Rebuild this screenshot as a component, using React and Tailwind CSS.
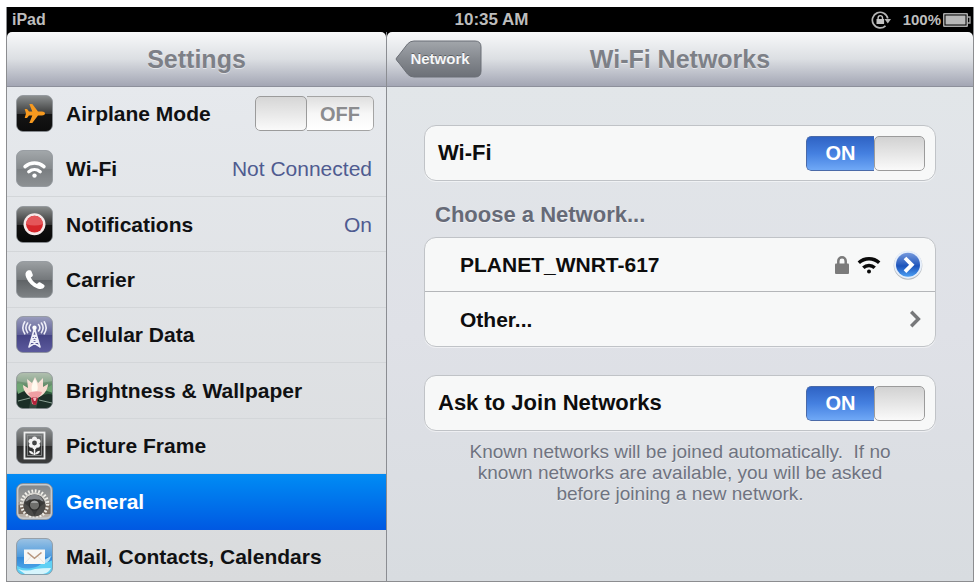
import { useState } from "react";

function Tile({ from, mid, mid2, to, id, children }) {
  return (
    <svg viewBox="0 0 37 37" className="h-[37px] w-[37px] shrink-0" aria-hidden="true">
      <defs>
        <linearGradient id={id} x1="0" y1="0" x2="0" y2="1">
          <stop offset="0" stopColor={from} />
          <stop offset="0.5" stopColor={mid} />
          <stop offset="0.52" stopColor={mid2} />
          <stop offset="1" stopColor={to} />
        </linearGradient>
        <clipPath id={id + "-clip"}>
          <rect x="0.5" y="0.5" width="36" height="36" rx="6.5" />
        </clipPath>
      </defs>
      <rect x="0.5" y="0.5" width="36" height="36" rx="6.5" fill={`url(#${id})`} />
      <g clipPath={`url(#${id}-clip)`}>{children}</g>
      <rect x="0.5" y="0.5" width="36" height="36" rx="6.5" fill="none" stroke="#8b9095" strokeOpacity="0.75" />
    </svg>
  );
}

const AirplaneIcon = () => (
  <Tile id="t-air" from="#8d9192" mid="#3c3d3d" mid2="#151515" to="#0c0c0c">
    <path
      d="M29 18.5c0-1.300-1.400-2.100-3-2.100h-4L16.300 9h-3l3 7.400h-3.300l-2-2.500H8.700l1.300 4.600-1.300 4.600H11l2-2.500h3.300l-3 7.500h3l5.700-7.500h4c1.600 0 3-.700 3-2z"
      fill="#f6991f"
    />
  </Tile>
);

const WifiTileIcon = () => (
  <Tile id="t-wifi" from="#a3a8ab" mid="#85898c" mid2="#7a7e81" to="#8d9194">
    <g fill="none" stroke="#fff" strokeWidth="3.4" strokeLinecap="round">
      <path d="M9 16.600a14.500 14.500 0 0 1 19 0" />
      <path d="M12.800 21.700a9 9 0 0 1 11.400 0" />
    </g>
    <circle cx="18.5" cy="25.6" r="2.2" fill="#fff" />
  </Tile>
);

const NotificationsIcon = () => (
  <Tile id="t-note" from="#8b8e8e" mid="#343535" mid2="#111" to="#060606">
    <circle cx="18.5" cy="18.2" r="11" fill="#f6e8e8" />
    <circle cx="18.5" cy="18.2" r="8.4" fill="#d6262b" />
    <path d="M10.100 18.200a8.400 8.400 0 0 1 16.800 0q-8.400 2.400-16.800 0z" fill="#e4565a" />
  </Tile>
);

const CarrierIcon = () => (
  <Tile id="t-car" from="#9ca0a3" mid="#74787b" mid2="#5f6366" to="#7e8285">
    <path
      d="M11.700 9.600c-2.400 1.200-2.800 3.900-1.500 6.900 2.200 5.200 6.200 9 11.400 10.900 3.100 1.100 5.700.5 6.800-1.700.4-.7.200-1.600-.5-2l-3.600-2.200c-.8-.4-1.500-.3-2.100.3l-1.200 1.300c-3-1.500-4.900-3.500-6.200-6.500l1.400-1.100c.6-.5.8-1.200.5-2l-1.300-3.300c-.4-1-2.100-1.100-3.700-.6z"
      fill="#fff"
    />
  </Tile>
);

const CellularIcon = () => (
  <Tile id="t-cell" from="#9a9dbd" mid="#5f6097" mid2="#444384" to="#5c5a9d">
    <g fill="none" stroke="#eeeef8" strokeLinecap="round" strokeWidth="1.6">
      <path d="M18.500 12.500L13 31M18.500 12.500L24 31M16.500 19.500h4M15.200 24.500h6.600M15 25l8.500 5.500M22 25l-8.500 5.500M17 19.500l4.500 5M20 19.500l-4.500 5" />
      <path d="M14.500 8.500a5 5 0 0 0 0 6.500M22.500 8.500a5 5 0 0 1 0 6.500M11.600 7a8.500 8.500 0 0 0 0 9.700M25.400 7a8.500 8.500 0 0 1 0 9.700M8.800 5.800a11 11 0 0 0 0 12M28.200 5.800a11 11 0 0 1 0 12" />
    </g>
    <circle cx="18.5" cy="11.8" r="2.2" fill="#fff" />
  </Tile>
);

const WallpaperIcon = () => (
  <Tile id="t-wall" from="#9fb09c" mid="#4c7f56" mid2="#2e5f3f" to="#35453e">
    <path d="M0 21q9-5 15 4l-2 12H0zM23 25q8-5 14-2v14H20z" fill="#1b2f27" />
    <path d="M0 12q8-3 10 6L2 22zM37 12l-9 6 9 3z" fill="#6fa574" />
    <path d="M2 29l12-3M23 28l13 3" stroke="#8ba093" strokeWidth="1" />
    <path d="M18.500 27C12 25 7 19 7 13l5 3-1-9 5 4 3-6 3 6 5-5 0 9 5-3c0 7-6 13-13.500 15z" fill="#f9dcd1" />
    <path d="M18.500 23c-4-4-4-9 .3-16 4 6 4 12-.3 16z" fill="#fffaf0" />
    <path d="M12 21q7-3 14-1-1 4-5 6l-1 7-4-1-1-6z" fill="#ef9fa3" />
    <path d="M15 26q4-1.500 7 0l-2 7-3-.5z" fill="#b3223a" />
    <path d="M17 26q2-1 3.500 0l-1 3h-1.500z" fill="#f3b4bb" />
    <path d="M0 0h37v9Q18 13 0 9z" fill="#fff" opacity="0.2" />
  </Tile>
);

const PictureFrameIcon = () => (
  <Tile id="t-pic" from="#8f9293" mid="#515353" mid2="#2b2c2c" to="#3d3e3e">
    <rect x="8.5" y="5.5" width="20" height="26" fill="none" stroke="#eceded" strokeWidth="1.8" />
    <rect x="11.5" y="8.5" width="14" height="20" fill="none" stroke="#909292" strokeWidth="0.8" />
    <g fill="#f2f2f2">
      <circle cx="18.5" cy="12" r="2.5" />
      <circle cx="15" cy="14.2" r="2.5" />
      <circle cx="22" cy="14.2" r="2.5" />
      <circle cx="15.500" cy="18.2" r="2.5" />
      <circle cx="21.500" cy="18.2" r="2.5" />
      <circle cx="18.5" cy="20" r="2.3" />
      <path d="M17.800 21h1.500v7h-1.500zM18 27.500q-4.500 0-5-3.800 4 0 5 3.800zM19 27.500q4.500 0 5-3.800-4 0-5 3.800z" />
    </g>
    <circle cx="18.5" cy="16" r="2.4" fill="#414343" />
  </Tile>
);

const GeneralIcon = () => (
  <Tile id="t-gen" from="#7f858a" mid="#a19f9b" mid2="#938a82" to="#c2bab2">
    <path d="M0 22h37v9H0z" fill="#7b6d62" />
    <circle cx="18.5" cy="21" r="13" fill="none" stroke="#f1efe9" strokeWidth="3.4" strokeDasharray="1.7 1.7" />
    <path d="M7 21a11.500 11.500 0 0 1 23 0z" fill="#d9d7d2" />
    <circle cx="18.500" cy="22.500" r="11" fill="#4b4a48" />
    <path d="M9.500 18q3-6.500 9-6.500t9 6.500l-9 3z" fill="#85878a" />
    <path d="M8.500 20l5-3.500h10l5 3.500-6 5-4 8-4-8z" fill="#393938" />
    <circle cx="18.5" cy="22" r="5.2" fill="#6f6f6c" stroke="#2b2b2a" strokeWidth="1.3" />
    <path d="M14.500 20a4.600 4.600 0 0 1 8 0z" fill="#a2a3a2" />
    <rect x="1.5" y="1.5" width="34" height="34" rx="5.5" fill="none" stroke="#c6cace" strokeWidth="1.8" />
  </Tile>
);

const MailIcon = () => (
  <Tile id="t-mail" from="#9cc3e4" mid="#4d9add" mid2="#3388d8" to="#55b2ee">
    <path d="M0 27q7 5 16 3 7-1 11-6 4 1 10-2v15H0z" fill="#5fd0f4" />
    <path d="M2 31q9 3 17 0 7-1 16-1-2 5-8 6H9z" fill="#d6f5fd" />
    <path d="M26 24q5-4 9-6-1 5-5 7z" fill="#b4e1f8" />
    <rect x="8" y="11.5" width="21" height="14.5" fill="#f8f7f5" />
    <path d="M8.500 25.500l7-7.500M28.500 25.500l-7-7.500" fill="none" stroke="#e3deda" strokeWidth="0.8" />
    <path d="M11.500 14.500l7 5.800 7-5.800" fill="none" stroke="#b8977f" strokeWidth="1.6" />
  </Tile>
);

function Switch({ label, defaultOn }) {
  const [on, setOn] = useState(defaultOn);
  return (
    <label className="relative flex h-[35px] w-[119px] shrink-0 cursor-pointer overflow-hidden rounded-[5px]">
      <input
        type="checkbox"
        role="switch"
        aria-label={label}
        checked={on}
        onChange={() => setOn(!on)}
        className="absolute inset-0 h-full w-full cursor-pointer opacity-0"
      />
      {on ? (
        <>
          <span className="flex flex-1 items-center justify-center rounded-l-[5px] border border-r-0 border-[#4a6aa8] bg-linear-to-b from-[#2f63c4] via-[#4580e0] to-[#6fa8f6] text-[20px] leading-none font-bold text-white">
            ON
          </span>
          <span className="w-[51px] rounded-[5px] border border-[#9b9b9b] bg-linear-to-b from-[#d2d2d2] to-[#fafafa]" />
        </>
      ) : (
        <>
          <span className="w-[52px] rounded-[5px] border border-[#9b9b9b] bg-linear-to-b from-[#d6d6d6] to-[#fafafa]" />
          <span className="flex flex-1 items-center justify-center rounded-r-[5px] border border-l-0 border-[#a4a4a4] bg-linear-to-b from-[#dfdfdf] via-[#f7f7f7] to-white text-[20px] leading-none font-bold text-[#8b8c8f]">
            OFF
          </span>
        </>
      )}
    </label>
  );
}

const ITEMS = [
  { name: "Airplane Mode", Icon: AirplaneIcon, toggle: true },
  { name: "Wi-Fi", Icon: WifiTileIcon, value: "Not Connected" },
  { name: "Notifications", Icon: NotificationsIcon, value: "On" },
  { name: "Carrier", Icon: CarrierIcon },
  { name: "Cellular Data", Icon: CellularIcon },
  { name: "Brightness & Wallpaper", Icon: WallpaperIcon },
  { name: "Picture Frame", Icon: PictureFrameIcon },
  { name: "General", Icon: GeneralIcon, active: true },
  { name: "Mail, Contacts, Calendars", Icon: MailIcon },
];

function StatusBar() {
  return (
    <div className="grid h-[25px] shrink-0 grid-cols-[1fr_auto_1fr] items-center bg-black pr-[2px] pl-[5px] text-[16px] leading-none font-bold text-[#bdbdbd]">
      <span>iPad</span>
      <span className="text-[17px]">10:35 AM</span>
      <span className="flex items-center justify-end">
        <svg viewBox="0 0 20 20" className="mr-3 h-5 w-5" aria-label="Rotation lock">
          <path d="M14.500 15.800A7.800 7.800 0 1 1 16.800 8.500" fill="none" stroke="#b5b5b5" strokeWidth="1.7" />
          <path d="M13.500 9h6.500l-3.200 4.500z" fill="#b5b5b5" />
          <rect x="5.500" y="9" width="7.600" height="5" fill="#c4c4c4" />
          <path d="M7.100 9V7.800a2.200 2.200 0 0 1 4.400 0V9" fill="none" stroke="#c4c4c4" strokeWidth="1.4" />
        </svg>
        <span className="text-[15px]">100%</span>
        <svg viewBox="0 0 28 14" className="ml-[2px] h-[14px] w-7" aria-label="Battery">
          <rect x="0.75" y="0.75" width="23.5" height="12.5" rx="0.5" fill="none" stroke="#aaa" strokeWidth="1.5" />
          <rect x="2.5" y="2.5" width="20" height="9" fill="#b8b8b8" />
          <path d="M24.500 4h2.500v6h-2.500" fill="none" stroke="#aaa" strokeWidth="1.3" />
        </svg>
      </span>
    </div>
  );
}

function Sidebar() {
  return (
    <nav aria-label="Settings" className="flex w-[380px] shrink-0 flex-col border-r border-[#8b8d92]">
      <header className="flex h-[55px] shrink-0 items-center justify-center rounded-t-[5px] border-b border-[#8d909b] bg-linear-to-b from-[#f8f9fa] via-[#dcdfe3] to-[#a3a6b4]">
        <h1 className="text-[25px] leading-none font-bold text-[#7d8087] [text-shadow:0_1px_0_rgba(255,255,255,0.5)]">Settings</h1>
      </header>
      <div className="min-h-0 flex-1 overflow-hidden bg-linear-to-b from-[#e6e9ed] to-[#d9dbdd]">
        <ul className="-mt-px grid h-[499px] grid-rows-9">
          {ITEMS.map(({ name, Icon, value, toggle, active }, i) => (
            <li
              key={name}
              className={
                active
                  ? "flex bg-linear-to-b from-[#048cf4] to-[#0158e2] text-white [text-shadow:0_-1px_0_rgba(0,40,120,0.5)]"
                  : i === 0
                    ? "flex text-[#101113]"
                    : "flex border-b border-[#d3d6d9] text-[#101113] [text-shadow:0_1px_0_rgba(255,255,255,0.6)]"
              }
            >
              {toggle ? (
                <div className="flex flex-1 items-center gap-[13px] pr-3 pl-[9px]">
                  <Icon />
                  <span className="flex-1 text-[21px] leading-none font-bold">{name}</span>
                  <Switch label={name} defaultOn={false} />
                </div>
              ) : (
                <button type="button" className="flex flex-1 items-center gap-[13px] pr-[14px] pl-[9px] text-left">
                  <Icon />
                  <span className="flex-1 text-[21px] leading-none font-bold">{name}</span>
                  {value && <span className="text-[21px] leading-none text-[#4f5b90]">{value}</span>}
                </button>
              )}
            </li>
          ))}
        </ul>
      </div>
    </nav>
  );
}

function BackButton() {
  return (
    <button type="button" className="relative h-[38px] w-[87px] pl-[3px] text-center">
      <svg viewBox="0 0 87 38" className="absolute inset-0 h-full w-full" aria-hidden="true">
        <defs>
          <linearGradient id="back" x1="0" y1="0" x2="0" y2="1">
            <stop offset="0" stopColor="#a2a6ab" />
            <stop offset="0.5" stopColor="#85898f" />
            <stop offset="1" stopColor="#6c7077" />
          </linearGradient>
        </defs>
        <path
          d="M1 19Q2 17 4 15L12.500 4Q15 1 19 1H80Q86 1 86 7V31Q86 37 80 37H19Q15 37 12.500 34L4 23Q2 21 1 19Z"
          fill="url(#back)"
          stroke="#6b6f76"
        />
      </svg>
      <span className="relative text-[15px] leading-none font-bold text-[#f6f7f8] [text-shadow:0_-1px_0_rgba(0,0,0,0.35)]">Network</span>
    </button>
  );
}

const card = "rounded-[12px] border border-[#c0c3c7] bg-[#f7f8f8] shadow-[0_1px_0_rgba(255,255,255,0.5)]";

function Detail() {
  return (
    <main className="flex min-w-0 flex-1 flex-col">
      <header className="grid h-[55px] shrink-0 grid-cols-[1fr_auto_1fr] items-center rounded-t-[5px] border-b border-[#8d909b] bg-linear-to-b from-[#f8f9fa] via-[#dcdfe3] to-[#a3a6b4] px-2">
        <BackButton />
        <h2 className="text-[25px] leading-none font-bold text-[#7d8087] [text-shadow:0_1px_0_rgba(255,255,255,0.5)]">Wi-Fi Networks</h2>
      </header>
      <div className="flex-1 bg-linear-to-b from-[#e2e6e9] via-[#dfe1e7] to-[#d8dce0] px-[37px] pt-[38px]">
        <section className={`${card} flex h-[56px] items-center justify-between pr-[10px] pl-[13px]`}>
          <span className="text-[22px] leading-6 font-bold text-[#0d0d0d]">Wi-Fi</span>
          <Switch label="Wi-Fi" defaultOn />
        </section>

        <h3 className="mt-[23px] mb-[11px] pl-[11px] text-[22px] leading-[22px] font-bold text-[#666a77] [text-shadow:0_1px_0_rgba(255,255,255,0.5)]">
          Choose a Network...
        </h3>
        <ul className={card}>
          <li className="flex h-[54px] items-center border-b border-[#b4b6b9] pr-[12px] pl-[35px]">
            <button type="button" className="flex h-full flex-1 items-center text-left">
              <span className="flex-1 text-[21px] leading-none font-bold text-[#0d0d0d]">PLANET_WNRT-617</span>
              <svg viewBox="0 0 14 18" className="h-[18px] w-[14px]" aria-label="Secured">
                <rect x="0" y="7.500" width="14" height="10.500" rx="1" fill="#7b7b7b" />
                <path d="M3.300 8.500V5a3.700 3.700 0 0 1 7.400 0v3.500" fill="none" stroke="#7b7b7b" strokeWidth="2.5" />
              </svg>
              <svg viewBox="0 0 24 18" className="mr-3 ml-2 h-[18px] w-6" aria-label="Signal strength">
                <g fill="none" stroke="#0a0a0a" strokeWidth="3.5">
                  <path d="M1.800 6.800a15 15 0 0 1 20.400 0" />
                  <path d="M6.300 11.800a8.400 8.400 0 0 1 11.400 0" />
                </g>
                <circle cx="12" cy="15.400" r="2" fill="#0a0a0a" />
              </svg>
            </button>
            <button type="button" aria-label="Network details" className="h-[30px] w-[30px]">
              <svg viewBox="0 0 30 30" className="h-[30px] w-[30px]">
                <defs>
                  <linearGradient id="disc" x1="0" y1="0" x2="0" y2="1">
                    <stop offset="0" stopColor="#7599dd" />
                    <stop offset="0.45" stopColor="#2f62c2" />
                    <stop offset="0.55" stopColor="#1c53bb" />
                    <stop offset="1" stopColor="#4da0f3" />
                  </linearGradient>
                </defs>
                <circle cx="15" cy="15.500" r="14.300" fill="#b6babf" />
                <circle cx="15" cy="14.700" r="14" fill="#e6effb" />
                <circle cx="15" cy="14.800" r="12" fill="url(#disc)" />
                <path d="M12 8l6.800 6.800-6.800 6.800" fill="none" stroke="#fff" strokeWidth="3.8" />
              </svg>
            </button>
          </li>
          <li className="flex h-[54px]">
            <button type="button" className="flex flex-1 items-center justify-between pr-[14px] pl-[35px] text-left">
              <span className="text-[21px] leading-none font-bold text-[#0d0d0d]">Other...</span>
              <svg viewBox="0 0 12 18" className="h-[18px] w-3" aria-hidden="true">
                <path d="M2.200 1.800L9.400 9l-7.200 7.200" fill="none" stroke="#77787a" strokeWidth="3.4" />
              </svg>
            </button>
          </li>
        </ul>

        <section className={`${card} mt-[28px] flex h-[56px] items-center justify-between pr-[10px] pl-[13px]`}>
          <span className="text-[22px] leading-6 font-bold text-[#0d0d0d]">Ask to Join Networks</span>
          <Switch label="Ask to Join Networks" defaultOn />
        </section>
        <p className="mx-auto mt-[10px] max-w-[440px] text-center text-[19px] leading-[21px] text-[#6f7380] [text-shadow:0_1px_0_rgba(255,255,255,0.5)]">
          Known networks will be joined automatically.&nbsp; If no known networks are available, you will be asked before joining a new network.
        </p>
      </div>
    </main>
  );
}

export default function App() {
  return (
    <div className="flex h-screen min-h-[584px] flex-col bg-white pt-[7px] pr-[2px] pb-[2px] pl-[6px] font-['Liberation_Sans',Arial,sans-serif]">
      <div className="flex min-h-0 flex-1 flex-col border border-t-0 border-[#8c8d90] bg-black">
        <StatusBar />
        <div className="flex min-h-0 flex-1">
          <Sidebar />
          <Detail />
        </div>
      </div>
    </div>
  );
}
